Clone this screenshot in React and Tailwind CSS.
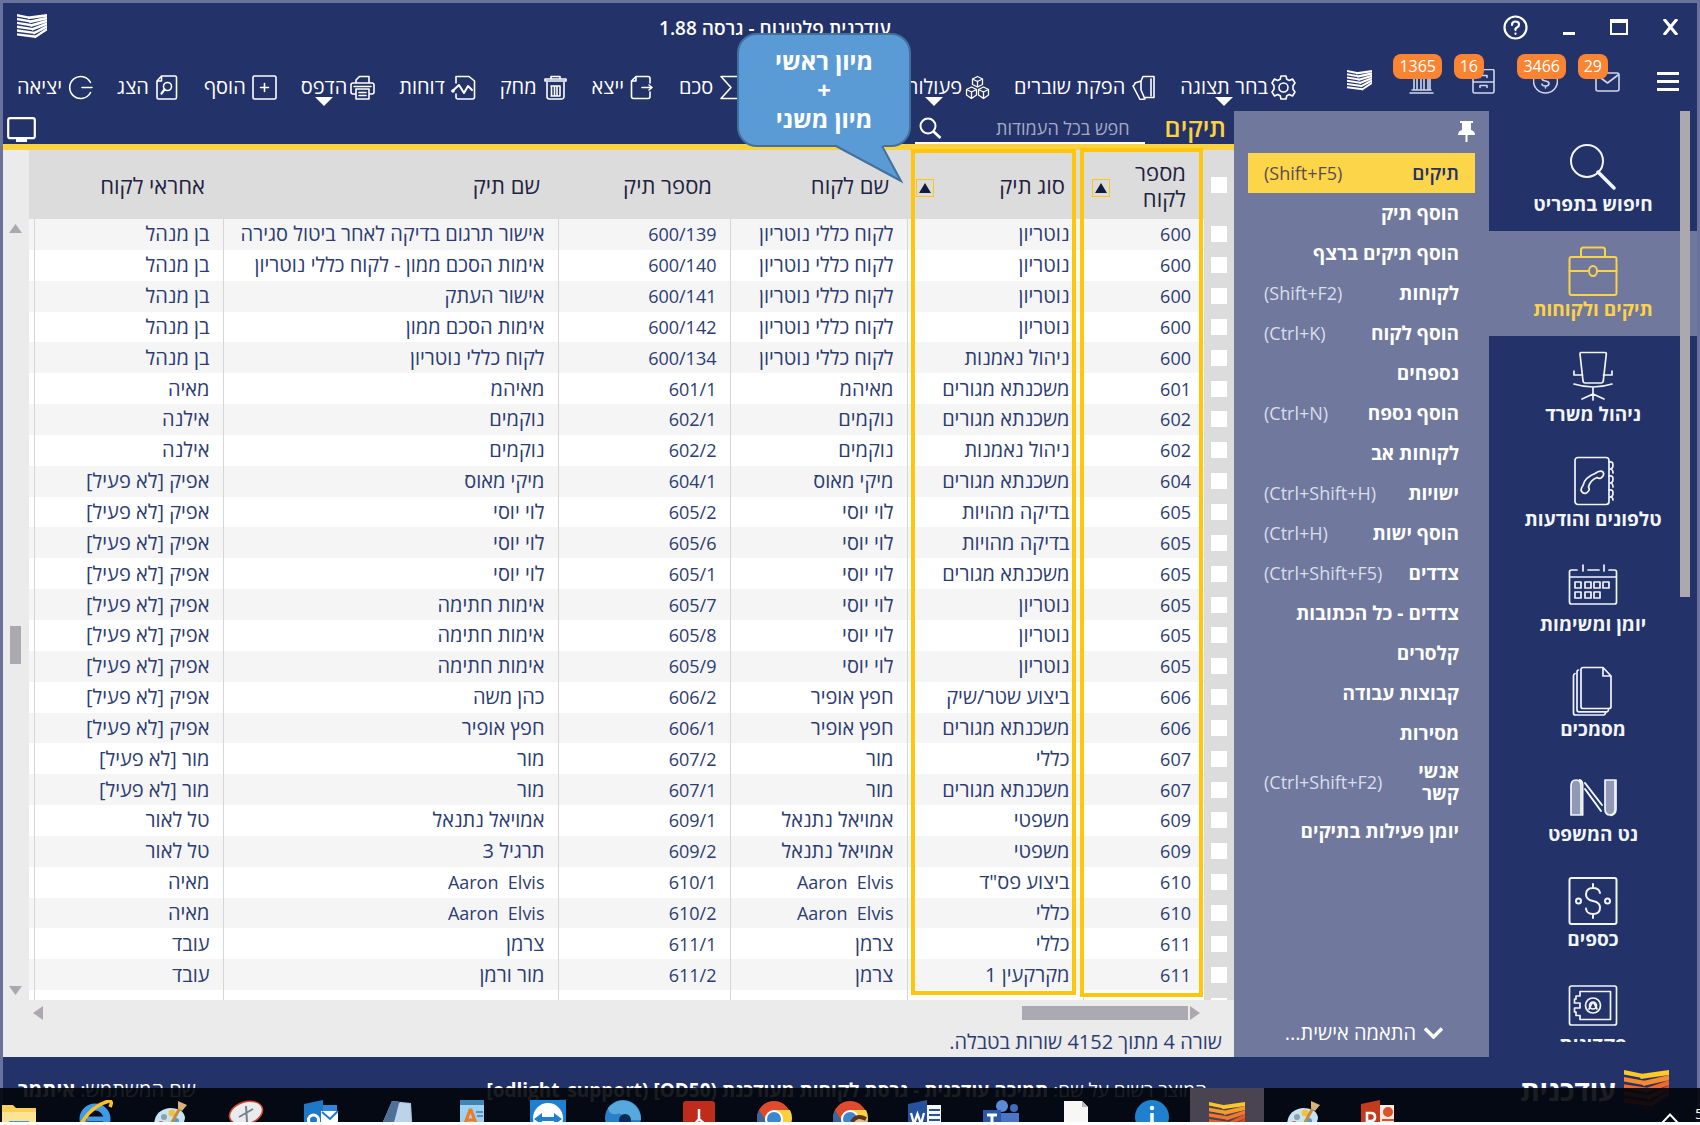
import React from "react";

const columns = [
  { key: "client", label: "מספר לקוח", sorted: true },
  { key: "kind", label: "סוג תיק", sorted: true },
  { key: "clientName", label: "שם לקוח" },
  { key: "fileNo", label: "מספר תיק" },
  { key: "fileName", label: "שם תיק" },
  { key: "owner", label: "אחראי לקוח" },
];

const rows = [
  ["600", "נוטריון", "לקוח כללי נוטריון", "600/139", "אישור תרגום בדיקה לאחר ביטול סגירה", "בן מנהל"],
  ["600", "נוטריון", "לקוח כללי נוטריון", "600/140", "אימות הסכם ממון - לקוח כללי נוטריון", "בן מנהל"],
  ["600", "נוטריון", "לקוח כללי נוטריון", "600/141", "אישור העתק", "בן מנהל"],
  ["600", "נוטריון", "לקוח כללי נוטריון", "600/142", "אימות הסכם ממון", "בן מנהל"],
  ["600", "ניהול נאמנות", "לקוח כללי נוטריון", "600/134", "לקוח כללי נוטריון", "בן מנהל"],
  ["601", "משכנתא מגורים", "מאיהמ", "601/1", "מאיהמ", "מאיה"],
  ["602", "משכנתא מגורים", "נוקמים", "602/1", "נוקמים", "אילנה"],
  ["602", "ניהול נאמנות", "נוקמים", "602/2", "נוקמים", "אילנה"],
  ["604", "משכנתא מגורים", "מיקי מאוס", "604/1", "מיקי מאוס", "אפיק [לא פעיל]"],
  ["605", "בדיקה מהויות", "לוי יוסי", "605/2", "לוי יוסי", "אפיק [לא פעיל]"],
  ["605", "בדיקה מהויות", "לוי יוסי", "605/6", "לוי יוסי", "אפיק [לא פעיל]"],
  ["605", "משכנתא מגורים", "לוי יוסי", "605/1", "לוי יוסי", "אפיק [לא פעיל]"],
  ["605", "נוטריון", "לוי יוסי", "605/7", "אימות חתימה", "אפיק [לא פעיל]"],
  ["605", "נוטריון", "לוי יוסי", "605/8", "אימות חתימה", "אפיק [לא פעיל]"],
  ["605", "נוטריון", "לוי יוסי", "605/9", "אימות חתימה", "אפיק [לא פעיל]"],
  ["606", "ביצוע שטר/שיק", "חפץ אופיר", "606/2", "כהן משה", "אפיק [לא פעיל]"],
  ["606", "משכנתא מגורים", "חפץ אופיר", "606/1", "חפץ אופיר", "אפיק [לא פעיל]"],
  ["607", "כללי", "מור", "607/2", "מור", "מור [לא פעיל]"],
  ["607", "משכנתא מגורים", "מור", "607/1", "מור", "מור [לא פעיל]"],
  ["609", "משפטי", "אמויאל נתנאל", "609/1", "אמויאל נתנאל", "טל לאור"],
  ["609", "משפטי", "אמויאל נתנאל", "609/2", "תרגיל 3", "טל לאור"],
  ["610", 'ביצוע פס"ד', "Aaron  Elvis", "610/1", "Aaron  Elvis", "מאיה"],
  ["610", "כללי", "Aaron  Elvis", "610/2", "Aaron  Elvis", "מאיה"],
  ["611", "כללי", "צרמן", "611/1", "צרמן", "עובד"],
  ["611", "מקרקעין 1", "צרמן", "611/2", "מור ורמן", "עובד"],
  ["611", "", "", "611/3", "", ""],
];

const menu = [
  ["תיקים", "(Shift+F5)"],
  ["הוסף תיק"],
  ["הוסף תיקים ברצף"],
  ["לקוחות", "(Shift+F2)"],
  ["הוסף לקוח", "(Ctrl+K)"],
  ["נספחים"],
  ["הוסף נספח", "(Ctrl+N)"],
  ["לקוחות אב"],
  ["ישויות", "(Ctrl+Shift+H)"],
  ["הוסף ישות", "(Ctrl+H)"],
  ["צדדים", "(Ctrl+Shift+F5)"],
  ["צדדים - כל הכתובות"],
  ["קלסרים"],
  ["קבוצות עבודה"],
  ["מסירות"],
  ["אנשי קשר", "(Ctrl+Shift+F2)"],
  ["יומן פעילות בתיקים"],
];

const hebrew = /[\u0590-\u05ff]/;

function Line({ size = 25, className = "", sw = 1.6, children }) {
  return (
    <svg
      width={size}
      height={size}
      viewBox={`0 0 ${size} ${size}`}
      fill="none"
      stroke="currentColor"
      strokeWidth={sw}
      strokeLinecap="round"
      strokeLinejoin="round"
      className={`shrink-0 ${className}`}
      aria-hidden="true"
    >
      {children}
    </svg>
  );
}

const white6 = ["#fff", "#fff", "#fff", "#fff", "#fff", "#fff"];

function Stack({ width, height, colors = white6 }) {
  const pitch = 23 / colors.length;
  const t = pitch * 0.62;
  return (
    <svg width={width} height={height} viewBox="0 0 30 26" preserveAspectRatio="none" className="shrink-0" aria-hidden="true">
      {colors.map((c, i) => {
        const y = i * pitch;
        const r = y * 0.72;
        const fold = 11 + y * 0.36;
        return (
          <g key={i} fill={c}>
            <path d={`M0 ${y} L${fold + 1} ${y + 2.4} L${fold + 1} ${y + 2.4 + t} L0 ${y + t}Z`} />
            <path d={`M${fold} ${y + 2.6} L30 ${r} L30 ${r + t * 1.15} L${fold} ${y + 2.6 + t * 1.15}Z`} />
          </g>
        );
      })}
    </svg>
  );
}

const sideIcons = {
  search: (
    <g strokeWidth="2">
      <circle cx="19" cy="20" r="16" />
      <path d="M30 31L46 47" strokeWidth="3.5" />
    </g>
  ),
  brief: (
    <g strokeWidth="2">
      <rect x="1.5" y="11" width="47" height="38" rx="2" />
      <path d="M13 11V4a2.5 2.5 0 0 1 2.500-2.500h19a2.500 2.500 0 0 1 2.500 2.500v7" />
      <path d="M1.500 25H21M29 25h19.500" />
      <ellipse cx="25" cy="25" rx="4" ry="5" />
    </g>
  ),
  chair: (
    <g>
      <path d="M13 1.500h24q1.500 0 1.300 1.500l-3 27q-.3 2-2 2H17q-1.700 0-2-2L12 3q-.2-1.500 1-1.500Z" />
      <path d="M6 20v4h8.500M44 20v4h-8.500M6 33q19 6 38 0M25 36v13M25 43l-11 5M25 43l11 5" />
    </g>
  ),
  phone: (
    <g>
      <rect x="7" y="1.500" width="34" height="47" rx="3" />
      <path d="M41 6q4-1 4 3t-3 4q3 0 3 4M41 20q4-1 4 3t-3 4q3 0 3 4M41 34q4-1 4 3t-3 4q3 0 3 3" />
      <path d="M27 17.500q5-4 8-1.500q2 3-2 6q-2 1-4-.5q-7 3-8.500 9.500q1.500 2.500 0 4q-3 4-6 1.500t.5-7q1.500-8 12-12Z" />
    </g>
  ),
  calendar: (
    <g>
      <path d="M9 9H3.500a2 2 0 0 0-2 2v30a2 2 0 0 0 2 2h43a2 2 0 0 0 2-2V11a2 2 0 0 0-2-2H41M20 9h11M1.500 16h47M15 4v6M36 4v6" />
      {[7, 17, 26, 35].map((x) => (
        <rect key={x} x={x} y="21" width="6" height="6" />
      ))}
      {[7, 17, 26].map((x) => (
        <rect key={x} x={x} y="31" width="6" height="6" />
      ))}
    </g>
  ),
  docs: (
    <g>
      <path d="M35 1.500H15a2 2 0 0 0-2 2v37a2 2 0 0 0 2 2h26a2 2 0 0 0 2-2V10ZM35 1.500V10h8" />
      <path d="M10.500 4q-1.500 0-1.500 2v38q0 1.800 2 1.800h28q1 0 1.500-2M7 7.500Q5.500 8 5.500 10v37q0 2 2 2h28q1.500 0 2-2" />
    </g>
  ),
  net: (
    <g>
      <path d="M3 44V15q0-6 5-6t5 6v29Z" fill="#fff" fillOpacity="0.5" />
      <path d="M14.500 44V14q0-4-3-5M17 12L34 34M17 18L33 40" strokeWidth="2" />
      <path d="M37 9v29q0 6 5 6t5-6V9Z" fill="#fff" fillOpacity="0.5" />
      <path d="M48 9v29q0 5-5 6.500" />
    </g>
  ),
  money: (
    <g strokeWidth="2">
      <rect x="1.500" y="2" width="47" height="46" rx="2" />
      <path d="M32 17q-1-5-7-5q-7 0-7 6.500q0 5 7 6.500t7 6.500q0 6.500-7 6.500q-6.500 0-7-5.500M25 8v4M25 38v4" />
      <circle cx="10.500" cy="25" r="2.500" />
      <circle cx="39.500" cy="25" r="2.500" />
    </g>
  ),
  safe: (
    <g>
      <rect x="1.500" y="5" width="47" height="39" rx="2" />
      <path d="M12 10.500h30.500v28H12v-4H8v-3.500H6.500v-4H12v-5H6.500v-4H8V15h4Z" />
      <circle cx="25" cy="24.500" r="7.500" />
      <circle cx="25" cy="24.500" r="3.500" />
      <path d="M21 28l3-6h2l3 6" />
    </g>
  ),
};

const side = [
  ["search", "חיפוש בתפריט"],
  ["brief", "תיקים ולקוחות"],
  ["chair", "ניהול משרד"],
  ["phone", "טלפונים והודעות"],
  ["calendar", "יומן ומשימות"],
  ["docs", "מסמכים"],
  ["net", "נט המשפט"],
  ["money", "כספים"],
  ["safe", "פקדונות"],
];

const ic = {
  gear: (
    <g>
      <circle cx="12.500" cy="12.500" r="4.500" />
      <path d="M10 1h5l.8 3.200 2.500 1.300L21.500 4l2.500 4-2 2.700v3.600L24 17l-2.500 4-3.200-1.500-2.500 1.300L15 24h-5l-.8-3.200-2.500-1.300L3.500 21 1 17l2-2.700v-3.600L1 8l2.500-4 3.200 1.500 2.500-1.300Z" />
    </g>
  ),
  tickets: (
    <g>
      <path d="M10 6L12 1.500h11v21H13M10 6v9l4 9-5 .5L2 11Q4 10 4 8l6-2M10 15V6" />
      <path d="M20 4v17" />
    </g>
  ),
  cubes: (
    <g strokeWidth="1.300">
      <path d="M12.500 1.500l5 2.500v5.500l-5 2.500-5-2.500V4ZM7.500 4l5 2.500 5-2.500M12.500 6.500V12" />
      <path d="M6.500 12l5 2.500V20l-5 3.500-5-3.500v-5.500ZM1.500 14.500l5 2.500 5-2.500M6.500 17v6" />
      <path d="M18.500 12l5 2.500V20l-5 3.500-5-3.500v-5.500ZM13.500 14.500l5 2.500 5-2.500M18.500 17v6" />
    </g>
  ),
  sigma: <path d="M23 5V1.500H2L12 12.500 2 23.500h21V20" />,
  exportDoc: <path d="M20 8V3.500a2 2 0 0 0-2-2H6L1.500 6v15.500a2 2 0 0 0 2 2H18a2 2 0 0 0 2-2V17M1.500 6H6V1.500M12 12.500h10M19 10l3 2.500L19 15" />,
  trash: (
    <g>
      <path d="M2 6V4h21v2ZM8 4V1.500h9V4M4 7.500v14a2.500 2.500 0 0 0 2.500 2.500h12a2.500 2.500 0 0 0 2.500-2.500v-14" />
      <path d="M8 11h9M8.500 11v9.500M11.500 11v9.500M14 11v9.500M17 11v9.500M8 21h9" />
    </g>
  ),
  report: (
    <g>
      <path d="M5 8V1.500h13L23.500 6v16a2 2 0 0 1-2 2H7a2 2 0 0 1-2-2v-3" />
      <path d="M1.500 16L8 10l5 8 4-7 4 4" strokeWidth="2" />
      <circle cx="2" cy="16" r="1" />
    </g>
  ),
  print: (
    <g>
      <path d="M6 8V5l3.500-3.500H19V8M6 19H3a2 2 0 0 1-2-2v-7a2 2 0 0 1 2-2h19a2 2 0 0 1 2 2v7a2 2 0 0 1-2 2h-3M6 14h13v10H6ZM9 17.500h7M9 20.500h7M4 11.500h17" />
    </g>
  ),
  plus: (
    <g>
      <rect x="1" y="1" width="23" height="23" rx="1.500" />
      <path d="M12.500 8.500v8M8.500 12.500h8" />
    </g>
  ),
  view: (
    <g>
      <path d="M6.500 1H20a1.500 1.500 0 0 1 1.500 1.500v20A1.500 1.500 0 0 1 20 24H3.500A1.500 1.500 0 0 1 2 22.500V6ZM2 6h4.500V1" />
      <circle cx="12.500" cy="11.500" r="4" />
      <path d="M9.500 14.500L6.500 18.500" strokeWidth="2.200" />
    </g>
  ),
  exit: <path d="M22.500 7.500A11 11 0 1 0 22.500 17.500M14 12.500h10" />,
};

function Tool({ icon, label, caret, tight }) {
  return (
    <button className={`relative flex items-center whitespace-nowrap text-[20px] leading-6 ${tight ? "gap-[3px]" : "gap-[6px]"}`}>
      <Line>{ic[icon]}</Line>
      <span>{label}</span>
      {caret && (
        <svg width="18" height="9" viewBox="0 0 18 9" className="absolute -bottom-[6px] left-[calc(50%-23px)]" aria-hidden="true">
          <path d="M0 0h18L9 9Z" fill="#fff" />
        </svg>
      )}
    </button>
  );
}

function Status({ badge, wide, label, children }) {
  return (
    <button aria-label={label} className="relative flex size-[25px] items-center justify-center text-[#cfd6ea]">
      {children}
      {badge && (
        <span
          className={`absolute -top-[15px] flex h-[25px] items-center rounded-lg bg-[#fb8433] px-[6px] text-[16px] leading-none text-white ${wide ? "-right-2" : "right-3"}`}
        >
          {badge}
        </span>
      )}
    </button>
  );
}

function Toolbar() {
  return (
    <div className="flex h-[60px] items-center pr-[18px] pl-[14px]">
      <div className="flex items-center gap-[37px]">
        <button aria-label="תפריט" className="flex w-[22px] flex-col gap-[5px]">
          <span className="h-[3px] bg-white" />
          <span className="h-[3px] bg-white" />
          <span className="h-[3px] bg-white" />
        </button>
        <Status badge="29" label="דואר">
          <Line>
            <rect x="1" y="4" width="23" height="18" rx="2" />
            <path d="M2 6l10.500 8L23 6" />
          </Line>
        </Status>
        <Status badge="3466" wide label="תשלומים">
          <Line>
            <circle cx="12.500" cy="12" r="12" />
            <path d="M16 9q-1-2-3.500-2T9 9.500q0 2 3.500 2.500t3.500 2.500q0 2.500-3.500 2.500T9 15M12.500 5v2M12.500 17v2" />
          </Line>
        </Status>
        <Status badge="16" label="תיוק">
          <Line>
            <path d="M2 13h21V2a1.500 1.500 0 0 0-1.500-1.500h-18A1.500 1.500 0 0 0 2 2v20.500A1.500 1.500 0 0 0 3.500 24h18a1.500 1.500 0 0 0 1.500-1.500V13M9 18.500v-2h7v2M9 8.500v-2h7v2" />
          </Line>
        </Status>
        <Status badge="1365" wide label="בתי משפט">
          <Line>
            <path d="M3 9h19M5 10v10M8 10v10M12 10v10M15 10v10M19 10v10M21 10v10M3 21h19M1 24h23" />
          </Line>
        </Status>
        <Status label="עודכנית">
          <Stack width={25} height={22} />
        </Status>
      </div>
      <div className="mr-[51px] flex flex-1 items-center justify-between pt-3 text-white">
        <div className="flex items-center gap-6">
          <Tool icon="gear" label="בחר תצוגה" caret tight />
          <Tool icon="tickets" label="הפקת שוברים" />
          <Tool icon="cubes" label="פעולות" caret tight />
        </div>
        <div className="flex items-center gap-6">
          <Tool icon="sigma" label="סכם" />
          <Tool icon="exportDoc" label="ייצא" />
          <Tool icon="trash" label="מחק" />
          <Tool icon="report" label="דוחות" />
          <Tool icon="print" label="הדפס" caret tight />
          <Tool icon="plus" label="הוסף" />
          <Tool icon="view" label="הצג" />
          <Tool icon="exit" label="יציאה" />
        </div>
      </div>
    </div>
  );
}

function TitleBar() {
  return (
    <header className="flex h-12 items-center pr-[19px] pl-[14px]">
      <div className="flex items-center gap-[35px] text-white">
        <button aria-label="סגור">
          <svg width="15" height="16" viewBox="0 0 15 16" stroke="#fff" strokeWidth="3" aria-hidden="true">
            <path d="M1 0L14 16M14 0L1 16" />
          </svg>
        </button>
        <button aria-label="הגדל" className="h-4 w-[18px] border-2 border-t-4 border-white" />
        <button aria-label="מזער" className="mt-3 h-[3px] w-3 bg-white" />
        <button aria-label="עזרה">
          <Line sw={2.2}>
            <circle cx="12.500" cy="12.500" r="11" />
            <path d="M9 10q0-3.500 3.500-3.500T16 9.500q0 2-2 3t-1.500 2.500M12.500 18.500v.3" />
          </Line>
        </button>
      </div>
      <h1 className="flex-1 pt-[2px] text-center text-[19px] leading-6 font-semibold text-white">עודכנית פלטינום - גרסה 1.88</h1>
      <Stack width={30} height={26} />
    </header>
  );
}

function SideNav() {
  return (
    <aside className="relative mb-[15px] w-[208px] shrink-0 overflow-hidden pt-[15px]">
      <nav className="flex flex-col">
        {side.map(([icon, label]) => (
          <button
            key={icon}
            className={`flex h-[105px] shrink-0 flex-col items-center pt-[15px] text-[19px] leading-[26px] font-bold ${icon === "brief" ? "bg-[#70799d] text-[#fcd24a]" : "text-[#f2f5fc]"}`}
          >
            <Line size={50} sw={1.7}>{sideIcons[icon]}</Line>
            {label}
          </button>
        ))}
      </nav>
      <div className="absolute top-0 left-[191px] h-[486px] w-[10px] bg-[#aca8ad]" />
    </aside>
  );
}

function MenuPanel() {
  return (
    <section className="flex w-[255px] shrink-0 flex-col bg-[#70799d] pt-[10px] pr-[14px] pb-3 pl-[14px]">
      <button aria-label="נעץ" className="mb-[11px] self-start">
        <svg width="17" height="21" viewBox="0 0 17 21" fill="#fff" aria-hidden="true">
          <path d="M2 0h13v2h-2v7q4 1 4 5H9.500v7h-2v-7H0q0-4 4-5V2H2Z" />
        </svg>
      </button>
      <ul className="flex flex-1 flex-col">
        {menu.map(([label, keys], i) => (
          <li key={label}>
            <button
              className={`flex min-h-10 w-full items-center justify-between py-[7px] pr-4 pl-4 text-right ${i === 0 ? "bg-[#fcd549] text-[#24306b]" : "text-white"}`}
            >
              <span className={`text-[19px] leading-[22px] ${i === 0 ? "font-semibold" : "font-bold"} ${i === 15 ? "w-12" : ""}`}>{label}</span>
              {keys && (
                <span dir="ltr" className={`text-[18px] leading-[22px] ${i === 0 ? "text-[#5b4a55]" : "text-[#d9deec]"}`}>
                  {keys}
                </span>
              )}
            </button>
          </li>
        ))}
      </ul>
      <button className="mr-8 flex items-center gap-2 text-[20px] leading-6 text-white">
        <svg width="19" height="12" viewBox="0 0 19 12" fill="none" stroke="#fff" strokeWidth="3.500" aria-hidden="true">
          <path d="M1 1.500l8.500 8.500L18 1.500" />
        </svg>
        התאמה אישית...
      </button>
    </section>
  );
}

function Check({ label }) {
  return <input type="checkbox" aria-label={label} className="block size-4 appearance-none bg-white" />;
}

function Grid() {
  return (
    <div className="relative flex min-h-0 flex-1">
      <div className="min-w-0 flex-1 overflow-hidden bg-white">
        <table className="h-[871px] w-full table-fixed border-collapse text-right">
          <colgroup>
            <col className="w-[30px]" />
            <col className="w-[121px]" />
            <col className="w-[176px]" />
            <col className="w-[177px]" />
            <col className="w-[172px]" />
            <col />
            <col className="w-[189px]" />
            <col className="w-[5px]" />
          </colgroup>
          <thead>
            <tr className="h-[69px] bg-[#dcdcdc] text-[22px] leading-[26px] text-[#1f2340]">
              <th className="p-0 pr-[7px]"><Check label="בחר הכל" /></th>
              {columns.map((c) => (
                <th key={c.key} className={`pr-[18px] font-medium ${c.sorted ? "pl-[9px]" : ""}`}>
                  <div className="flex items-center justify-between">
                    <span>{c.label}</span>
                    {c.sorted && (
                      <button aria-label={`מיין לפי ${c.label}`} className="mt-[6px] flex size-[18px] shrink-0 items-center justify-center border border-[#ffc60b]">
                        <svg width="12" height="10" viewBox="0 0 12 10" aria-hidden="true">
                          <path d="M6 0l6 10H0Z" fill="#141a3c" />
                        </svg>
                      </button>
                    )}
                  </div>
                </th>
              ))}
              <th className="p-0" />
            </tr>
          </thead>
          <tbody>
            {rows.map((r, i) => (
              <tr key={i} className="leading-6 text-[#2c3c72] odd:bg-[#f5f5f5]">
                <td className="bg-[#dcdcdc] p-0 pr-[7px]"><Check label={`בחר שורה ${i + 1}`} /></td>
                {r.map((v, j) => (
                  <td
                    key={j}
                    className={`overflow-hidden border-l border-[#d6d6da] p-0 pr-[13px] leading-6 whitespace-pre ${hebrew.test(v) ? "text-[20px]" : "text-[18px]"}`}
                  >
                    {v}
                  </td>
                ))}
                <td className="p-0" />
              </tr>
            ))}
          </tbody>
        </table>
      </div>
      <div className="flex w-[26px] flex-col items-center bg-[#ebebeb] pt-[74px] pb-[5px] pr-[2px]">
        <svg width="13" height="9" viewBox="0 0 13 9" aria-hidden="true"><path d="M6.500 0L13 9H0Z" fill="#aca8b0" /></svg>
        <div className="mt-[393px] h-[38px] w-[11px] bg-[#aca8b0]" />
        <div className="flex-1" />
        <svg width="13" height="9" viewBox="0 0 13 9" aria-hidden="true"><path d="M0 0h13L6.500 9Z" fill="#aca8b0" /></svg>
      </div>
      <div className="pointer-events-none absolute -top-[2px] right-[31px] bottom-[3px] w-[123px] border-4 border-[#ffc60b]" />
      <div className="pointer-events-none absolute -top-px right-[158px] bottom-[5px] w-[165px] border-4 border-[#ffc60b]" />
    </div>
  );
}

function Main() {
  return (
    <main className="flex min-w-0 flex-1 flex-col">
      <div className="flex h-[33px] items-end border-[#fcd23e] pr-2 pl-1">
        <h2 className="pb-[3px] text-[25px] leading-7 font-semibold text-[#fcd23e]">תיקים</h2>
        <div className="mr-[20px] flex w-[230px] items-center border-b-2 border-white pb-[2px]">
          <input
            aria-label="חפש"
            placeholder="חפש בכל העמודות"
            className="min-w-0 flex-1 bg-transparent pr-[15px] text-[18px] leading-6 text-white outline-none placeholder:text-[#a3abc6]"
          />
          <button aria-label="חיפוש" className="ml-1">
            <svg width="23" height="22" viewBox="0 0 23 22" fill="none" stroke="#fff" strokeWidth="2" aria-hidden="true">
              <circle cx="9" cy="9" r="7.500" />
              <path d="M14.500 14.500L21.500 21" strokeWidth="2.800" />
            </svg>
          </button>
        </div>
        <button aria-label="תצוגת מסך" className="mr-auto pb-[2px]">
          <svg width="29" height="25" viewBox="0 0 29 25" fill="none" stroke="#fff" strokeWidth="2.200" aria-hidden="true">
            <rect x="1.200" y="1.200" width="26.600" height="20" rx="2" />
            <path d="M9 23.500h11" strokeWidth="3" />
          </svg>
        </button>
      </div>
      <div className="h-[6px] shrink-0 bg-[#fcd23e]" />
      <Grid />
      <div className="flex h-[57px] shrink-0 flex-col bg-[#ebebeb]">
        <div className="flex items-center pt-[6px] pr-[34px] pl-[30px]">
          <svg width="10" height="14" viewBox="0 0 10 14" aria-hidden="true"><path d="M0 0L10 7L0 14Z" fill="#aca8b0" /></svg>
          <div className="mr-[2px] h-[14px] w-[166px] bg-[#aba9b1]" />
          <svg width="10" height="14" viewBox="0 0 10 14" className="mr-auto" aria-hidden="true"><path d="M10 0v14L0 7Z" fill="#aca8b0" /></svg>
        </div>
        <p className="mt-[10px] pr-3 text-[20px] leading-6 text-[#2c3c72]">שורה 4 מתוך 4152 שורות בטבלה.</p>
      </div>
    </main>
  );
}

function Callout() {
  return (
    <div className="absolute top-[33px] left-[737px] h-[114px] w-[174px] rounded-[20px] border-2 border-[#41719c] bg-[#5b9bd5] pt-[11px] text-center text-[24px] leading-[29px] font-bold text-white">
      מיון ראשי
      <br />+<br />
      מיון משני
      <svg width="70" height="40" viewBox="0 0 70 40" className="absolute top-[109px] left-[96px]" aria-hidden="true">
        <path d="M0 0L4 3L66 37L47 3L50 0Z" fill="#5b9bd5" />
        <path d="M1 2L66 37L47 2" fill="none" stroke="#41719c" strokeWidth="2" />
      </svg>
    </div>
  );
}

function Chrome() {
  return (
    <g>
      <circle cx="18" cy="18" r="17" fill="#de4b2f" />
      <path d="M18 10h16a17 17 0 0 1-15 25l7-14Z" fill="#fccf3d" />
      <path d="M3 10a17 17 0 0 0 15 25l4-8-12-6Z" fill="#39679b" />
      <circle cx="18" cy="19" r="9" fill="#fff" />
      <circle cx="18" cy="19" r="7" fill="#3a87d2" />
    </g>
  );
}

function Palette() {
  return (
    <g>
      <path d="M2 26q0-16 16-18q14 0 15 10q-2 12-14 16H6q-4-3-4-8Z" fill="#c7e4f5" />
      <circle cx="12" cy="17" r="3" fill="#8aa3ad" />
      <circle cx="20" cy="13" r="3.500" fill="#f3c141" />
      <circle cx="9" cy="24" r="3" fill="#e0663a" />
      <circle cx="24" cy="21" r="3" fill="#4c9de0" />
      <path d="M18 26L29 6" stroke="#c98a3c" strokeWidth="3" />
      <path d="M26 1l9 4-5 6-4-3Z" fill="#d9b27a" />
    </g>
  );
}

function tag(fill, accent, body) {
  return (
    <g>
      <path d="M1 4L20 0v36H1Z" fill={fill} />
      <rect x="20" y="5" width="14" height="30" fill={accent} />
      {body}
    </g>
  );
}

const apps = [
  ["קבצים", <g><path d="M1 5h11l3 3h20v28H1Z" fill="#f6cf5d" /><path d="M1 12h34v24H1Z" fill="#fde394" /><path d="M8 21h20v15H8Z" fill="#3f97dc" /></g>],
  ["דפדפן", <g><circle cx="18" cy="19" r="12" fill="none" stroke="#3f9be8" strokeWidth="7" /><path d="M10 19h20" stroke="#3f9be8" strokeWidth="5" /><path d="M1 30Q12 6 32 1q4 0 1 6" fill="none" stroke="#fbc02d" strokeWidth="3.500" /></g>],
  ["צייר", <Palette />],
  ["חיתוך", <g><ellipse cx="18" cy="13" rx="17" ry="11" fill="#e9ebee" stroke="#d8462d" strokeWidth="1.500" transform="rotate(-18 18 13)" /><path d="M18 6l1 16M11 17l14-8" stroke="#787f88" strokeWidth="2" /></g>],
  ["Outlook", tag("#1e78c8", "#2f88d6", <g><circle cx="10.500" cy="20" r="5" fill="none" stroke="#fff" strokeWidth="3" /><path d="M18 11h17v14H18Z" fill="#fff" /><path d="M19 12l8 7 8-8" fill="none" stroke="#1e78c8" strokeWidth="2" /></g>)],
  ["פנקס", <g><path d="M13 1l19 2 2 32-34-4Z" fill="#a8c4de" /><path d="M13 1l8 1-9 31-12-2Z" fill="#4e6f96" /><path d="M20 3l11 1 1 26-19 1Z" fill="#bcd3ea" /></g>],
  ["WordPad", <g><rect x="6" y="0" width="24" height="36" fill="#9fd1f2" /><rect x="6" y="0" width="24" height="5" fill="#3f85b5" /><path d="M10 26l6-16h1l6 16M12 20h9" stroke="#f07a1d" strokeWidth="3" fill="none" /><path d="M22 12h7M23 16h6" stroke="#5a8fc0" strokeWidth="2" /></g>],
  ["TeamViewer", <g><rect width="36" height="36" fill="#1f7fd0" /><circle cx="18" cy="18" r="15" fill="#fff" /><path d="M4 19l8-6v4h12v-4l8 6-8 6v-4H12v4Z" fill="#1f7fd0" /></g>],
  ["Edge", <g><circle cx="18" cy="18" r="18" fill="#2a7fcb" /><path d="M3 8Q14-4 27 3q9 6 9 17H20q-2-8-9-6Q4 15 3 8Z" fill="#57a8dd" /><circle cx="20" cy="20" r="6" fill="#0c2b52" /></g>],
  ["Acrobat", <g><rect x="2" y="1" width="32" height="35" rx="3" fill="#bf2c1c" /><path d="M18 9v10L9 30M18 19l10 9M12 25h12" stroke="#fff" strokeWidth="2.500" fill="none" /></g>],
  ["Chrome", <Chrome />],
  ["Chrome 2", <g><Chrome /><circle cx="28" cy="24" r="8" fill="#e8b98a" /><path d="M20 22q4-8 14-3" stroke="#5b3322" strokeWidth="4" fill="none" /></g>],
  ["Word", tag("#26519c", "#f4f7fb", <g><path d="M22 10h11M22 15h11M22 20h11" stroke="#26519c" strokeWidth="2" /><path d="M4 13l3 11 3.500-10L14 24l3-11" stroke="#fff" strokeWidth="2.300" fill="none" /></g>)],
  ["Teams", <g><circle cx="19" cy="6" r="6" fill="#5b8bd8" /><circle cx="31" cy="8" r="4" fill="#3d6cc0" /><rect x="14" y="13" width="22" height="23" fill="#4a75c4" /><rect x="0" y="10" width="18" height="26" fill="#2a57a8" /><path d="M4 15h10M9 15v12" stroke="#fff" strokeWidth="3" /></g>],
  ["מסמך", <g><path d="M6 1h18l6 6v29H6Z" fill="#f7f7f5" /><path d="M24 1v6h6Z" fill="#b9bcbd" /></g>],
  ["מידע", <g><circle cx="18" cy="17" r="17" fill="#1f80cf" /><path d="M18 13v14" stroke="#fff" strokeWidth="3.500" /><circle cx="18" cy="8" r="2.200" fill="#fff" /></g>],
  ["עודכנית", null],
  ["צייר 2", <Palette />],
  ["PowerPoint", tag("#c43a1d", "#fbe9e4", <g><circle cx="28" cy="12" r="5" fill="#d9532c" /><path d="M22 20h12M22 24h12" stroke="#d9532c" strokeWidth="2" /><path d="M7 27V13h4q4 0 4 4t-4 4H7" stroke="#fff" strokeWidth="2.600" fill="none" /></g>)],
];

function Taskbar() {
  return (
    <div dir="ltr" className="absolute inset-x-0 bottom-[3px] flex h-[34px] overflow-hidden bg-[#02040a]/90">
      <div className="flex flex-1 items-stretch justify-between pl-px">
        {apps.map(([name, art]) =>
          art ? (
            <button key={name} aria-label={name} className="w-9 pt-3">
              <svg width="36" height="36" viewBox="0 0 36 36" aria-hidden="true">{art}</svg>
            </button>
          ) : (
            <button key={name} aria-label={name} className="-mx-[19px] w-[74px] bg-[#4a4452] px-[19px] pt-[14px]">
              <Stack width={36} height={32} colors={["#fcc62c", "#f79a2c", "#f2762c", "#e75a25", "#d9481f"]} />
            </button>
          )
        )}
      </div>
      <div className="flex w-[304px] justify-end gap-4 text-white">
        <button aria-label="הצג סמלים מוסתרים" className="pt-[25px]">
          <svg width="18" height="10" viewBox="0 0 18 10" fill="none" stroke="#fff" strokeWidth="2" aria-hidden="true"><path d="M1 10L9 1.500L17 10" /></svg>
        </button>
        <span className="w-[5px] overflow-hidden pt-[17px] text-[15px] leading-[17px]">5</span>
      </div>
    </div>
  );
}

export default function App() {
  return (
    <div dir="rtl" className="relative flex h-screen flex-col overflow-hidden bg-white pb-[3px] font-['Open_Sans','Noto_Sans','DejaVu_Sans',sans-serif]">
      <div className="flex min-h-0 flex-1 flex-col border-x-[3px] border-t-[3px] border-[#69729b] bg-[#233268]">
        <TitleBar />
        <Toolbar />
        <div className="flex min-h-0 flex-1">
          <SideNav />
          <MenuPanel />
          <Main />
        </div>
        <footer className="flex h-[65px] shrink-0 items-center text-[19px] leading-6 text-white">
          <div className="flex w-[463px] items-center gap-2 pr-7">
            <Stack width={45} height={40} colors={["#ffc928", "#f88a2e", "#ee6a2a", "#d9502a", "#c94a2a"]} />
            <span className="text-[28px] leading-9 font-bold">עודכנית</span>
          </div>
          <div className="flex flex-1 justify-between pr-[27px] pl-[15px]">
            <p>
              המוצר רשום על שם:{" "}
              <b>תמיכה עודכנית - גרסת לקוחות מעודכנת <bdi dir="ltr">[odlight_support) [OD50)</bdi></b>
            </p>
            <p className="text-[20px]">שם המשתמש: <b>איתמר</b></p>
          </div>
        </footer>
      </div>
      <Callout />
      <Taskbar />
    </div>
  );
}
